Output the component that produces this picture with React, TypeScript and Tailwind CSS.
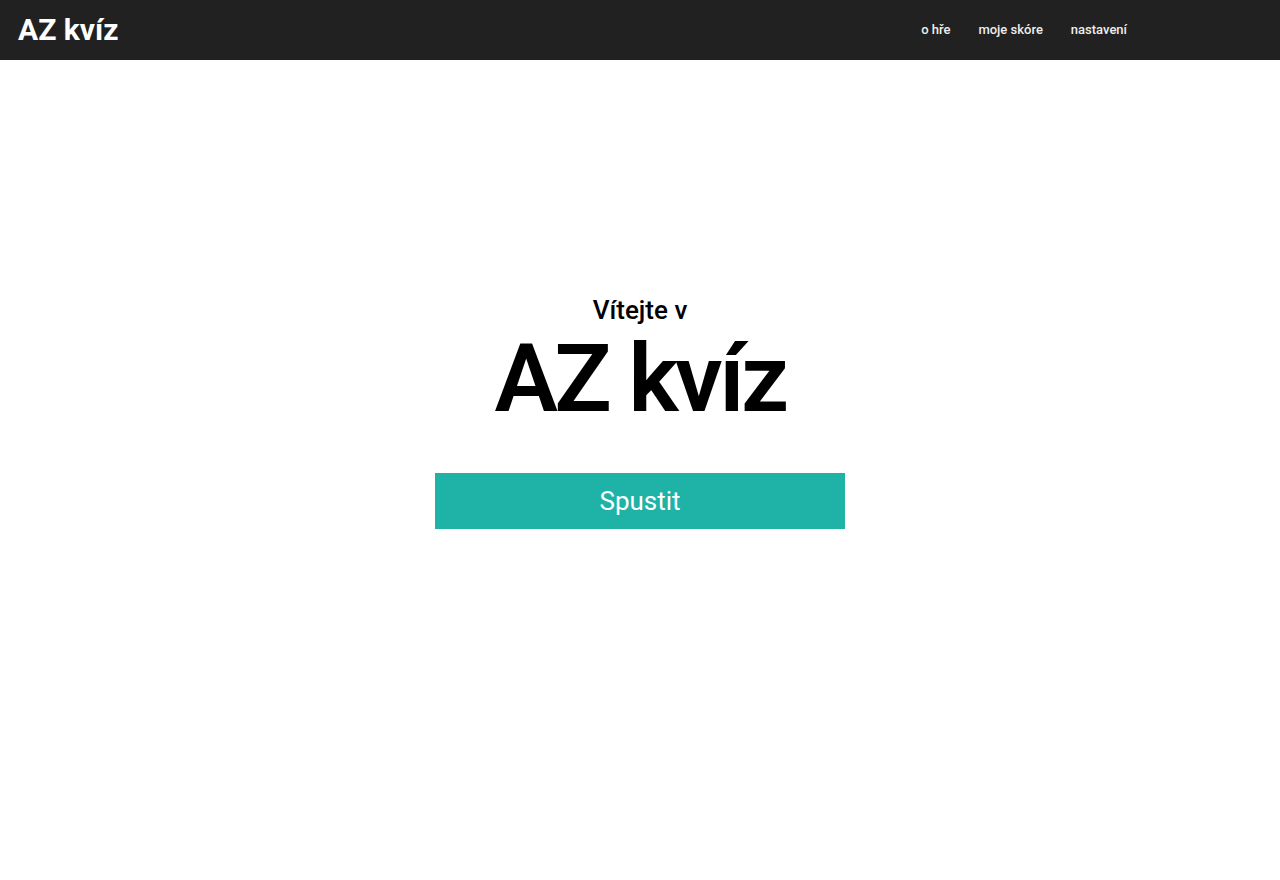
import React from "react";

export default function App() {
  return (
    <div className="min-h-screen bg-white" style={{ fontFamily: "Roboto, 'Noto Sans', sans-serif" }}>
      <header className="h-[60px] bg-[#212121] flex items-center justify-between pl-[18px] pr-[139px]">
        <div className="text-white text-[30px] font-bold leading-none">AZ kvíz</div>
        <nav className="flex items-center text-[13px] font-medium text-[#eeeeee]">
          <a className="px-[14px]">o hře</a>
          <a className="px-[14px]">moje skóre</a>
          <a className="px-[14px]">nastavení</a>
        </nav>
      </header>
      <main className="flex flex-col items-center pt-[235px]">
        <div className="text-[26px] font-medium leading-[30px] text-black">Vítejte v</div>
        <div className="text-[95px] font-semibold leading-[110px] tracking-[-3.5px] text-black mt-[-1px]">AZ kvíz</div>
        <button className="mt-[39px] w-[410px] h-[56px] bg-[#1fb2a6] text-white text-[26px] leading-none flex items-center justify-center">
          Spustit
        </button>
      </main>
    </div>
  );
}
